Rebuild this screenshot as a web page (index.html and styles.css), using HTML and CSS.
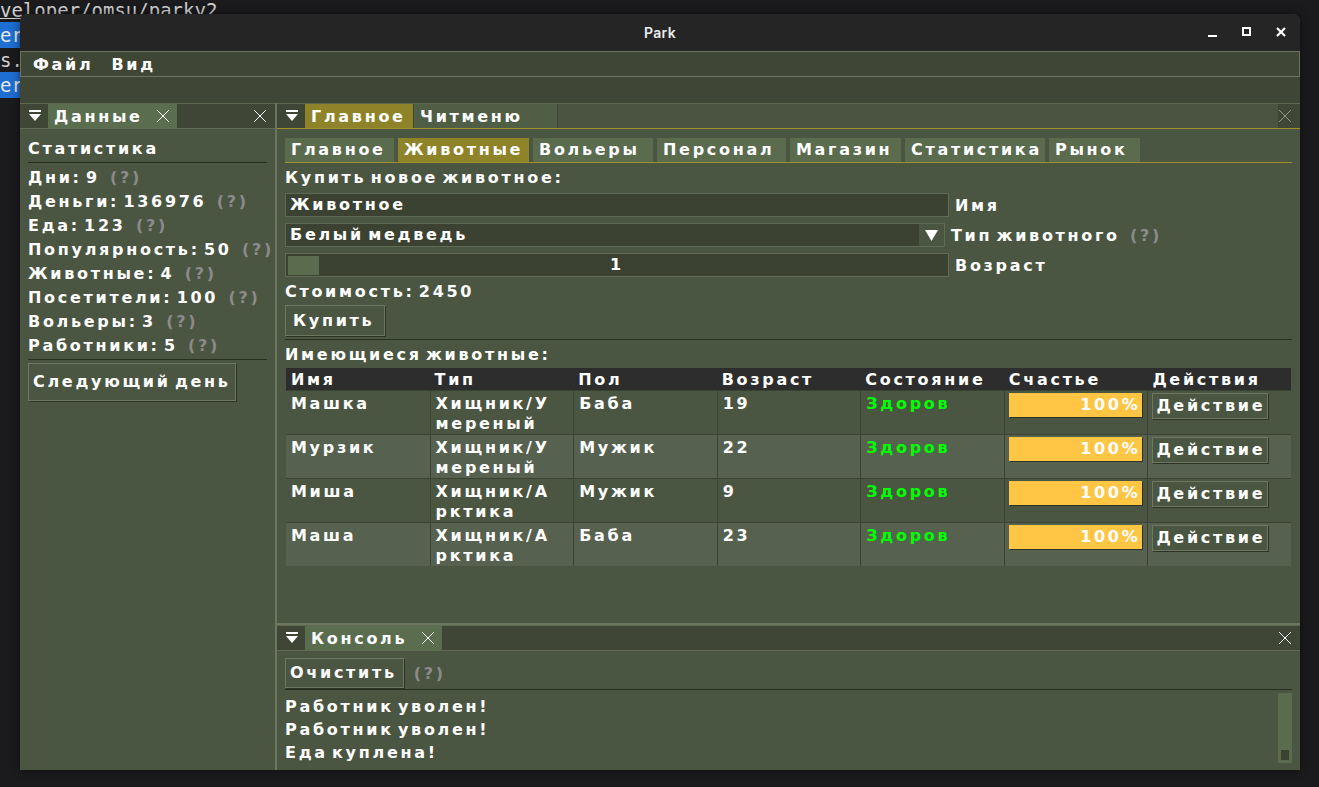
FILE: index.html
```html
<!DOCTYPE html>
<html lang="ru">
<head>
<meta charset="utf-8">
<title>Park</title>
<link rel="stylesheet" href="styles.css">
</head>
<body>
<div class="terminal">
  <div class="tline"><span class="ul">ve</span>loper/omsu/parky2</div>
  <div class="tline"><span class="hl">er</span></div>
  <div class="tline">s.</div>
  <div class="tline"><span class="hl">er</span></div>
</div>

<div class="window">
  <div class="titlebar">
    <span class="title">Park</span>
    <div class="wctl">
      <svg width="12" height="12" viewBox="0 0 12 12"><rect x="1" y="9" width="9" height="2" fill="#fff"/></svg>
      <svg width="12" height="12" viewBox="0 0 12 12"><rect x="2" y="2" width="7" height="7" fill="none" stroke="#fff" stroke-width="2"/></svg>
      <svg width="12" height="12" viewBox="0 0 12 12"><path d="M2 2 L10 10 M10 2 L2 10" stroke="#fff" stroke-width="2.2"/></svg>
    </div>
  </div>
  <div class="menubar"><span>Файл</span><span>Вид</span></div>
  <div class="band"></div>
  <div class="dock">
    <div class="leftdock">
      <div class="tabbar">
        <div class="collapse"><svg width="12" height="12" viewBox="0 0 12 12"><rect x="0" y="0" width="12" height="2" fill="#fff"/><path d="M0 4 H12 L6 11 Z" fill="#fff"/></svg></div>
        <div class="dtab focused tab-data"><span>Данные</span><svg class="x" width="14" height="14" viewBox="0 0 14 14"><path d="M1 1 L13 13 M13 1 L1 13" stroke="#fff" stroke-width="1"/></svg></div>
        <div class="tabfill"></div>
        <svg class="x bx" width="14" height="14" viewBox="0 0 14 14"><path d="M1 1 L13 13 M13 1 L1 13" stroke="#fff" stroke-width="1"/></svg>
      </div>
      <div class="lbody">
        <div class="line">Статистика</div>
        <div class="sep"></div>
        <div class="line">Дни: 9 <span class="q">(?)</span></div>
        <div class="line">Деньги: 136976 <span class="q">(?)</span></div>
        <div class="line">Еда: 123 <span class="q">(?)</span></div>
        <div class="line">Популярность: 50 <span class="q">(?)</span></div>
        <div class="line">Животные: 4 <span class="q">(?)</span></div>
        <div class="line">Посетители: 100 <span class="q">(?)</span></div>
        <div class="line">Вольеры: 3 <span class="q">(?)</span></div>
        <div class="line">Работники: 5 <span class="q">(?)</span></div>
        <div class="sep"></div>
        <div class="btn big">Следующий день</div>
      </div>
    </div>
    <div class="rightcol">
      <div class="mainpanel">
        <div class="tabbar gold">
          <div class="collapse"><svg width="12" height="12" viewBox="0 0 12 12"><rect x="0" y="0" width="12" height="2" fill="#fff"/><path d="M0 4 H12 L6 11 Z" fill="#fff"/></svg></div>
          <div class="dtab active tab-main">Главное</div>
          <div class="dtab tab-cheat">Читменю</div>
          <div class="tabfill light"></div>
          <svg class="x bx" width="14" height="14" viewBox="0 0 14 14"><path d="M1 1 L13 13 M13 1 L1 13" stroke="#8f9885" stroke-width="1"/></svg>
        </div>
        <div class="mbody">
          <div class="itabs">
            <div class="itab">Главное</div>
            <div class="itab on">Животные</div>
            <div class="itab">Вольеры</div>
            <div class="itab">Персонал</div>
            <div class="itab">Магазин</div>
            <div class="itab">Статистика</div>
            <div class="itab">Рынок</div>
          </div>
          <div class="line">Купить новое животное:</div>
          <div class="frow"><div class="input">Животное</div><span class="flabel">Имя</span></div>
          <div class="frow"><div class="input combo"><span>Белый медведь</span><span class="arrow"><svg width="13" height="12" viewBox="0 0 13 12"><path d="M0 1 H13 L6.5 12 Z" fill="#fff"/></svg></span></div><span class="flabel">Тип животного <span class="q">(?)</span></span></div>
          <div class="frow"><div class="input slider"><span class="grab"></span><span class="sval">1</span></div><span class="flabel">Возраст</span></div>
          <div class="line cost">Стоимость: 2450</div>
          <div class="btn buy">Купить</div>
          <div class="sep wide"></div>
          <div class="line">Имеющиеся животные:</div>
          <div class="table">
            <div class="tr th"><div>Имя</div><div>Тип</div><div>Пол</div><div>Возраст</div><div>Состояние</div><div>Счастье</div><div>Действия</div></div>
            <div class="tr"><div>Машка</div><div>Хищник/У<br>мереный</div><div>Баба</div><div>19</div><div class="ok">Здоров</div><div class="pc"><div class="bar">100%</div></div><div class="pc"><div class="btn act">Действие</div></div></div>
            <div class="tr alt"><div>Мурзик</div><div>Хищник/У<br>мереный</div><div>Мужик</div><div>22</div><div class="ok">Здоров</div><div class="pc"><div class="bar">100%</div></div><div class="pc"><div class="btn act">Действие</div></div></div>
            <div class="tr"><div>Миша</div><div>Хищник/А<br>рктика</div><div>Мужик</div><div>9</div><div class="ok">Здоров</div><div class="pc"><div class="bar">100%</div></div><div class="pc"><div class="btn act">Действие</div></div></div>
            <div class="tr alt"><div>Маша</div><div>Хищник/А<br>рктика</div><div>Баба</div><div>23</div><div class="ok">Здоров</div><div class="pc"><div class="bar">100%</div></div><div class="pc"><div class="btn act">Действие</div></div></div>
          </div>
        </div>
      </div>
      <div class="console">
        <div class="tabbar">
          <div class="collapse"><svg width="12" height="12" viewBox="0 0 12 12"><rect x="0" y="0" width="12" height="2" fill="#fff"/><path d="M0 4 H12 L6 11 Z" fill="#fff"/></svg></div>
          <div class="dtab focused tab-console"><span>Консоль</span><svg class="x" width="14" height="14" viewBox="0 0 14 14"><path d="M1 1 L13 13 M13 1 L1 13" stroke="#fff" stroke-width="1"/></svg></div>
          <div class="tabfill"></div>
          <svg class="x bx" width="14" height="14" viewBox="0 0 14 14"><path d="M1 1 L13 13 M13 1 L1 13" stroke="#fff" stroke-width="1"/></svg>
        </div>
        <div class="cbody">
          <div class="crow"><div class="btn clr">Очистить</div><span class="q">(?)</span></div>
          <div class="sep csep"></div>
          <div class="log">
            <div class="loglines">
              <div class="line cl">Работник уволен!</div>
              <div class="line cl">Работник уволен!</div>
              <div class="line cl">Еда куплена!</div>
            </div>
            <div class="scroll"><span class="sgrab"></span></div>
          </div>
        </div>
      </div>
    </div>
  </div>
</div>
</body>
</html>
```

FILE: styles.css
```css
html, body {
  margin: 0;
  padding: 0;
}
body {
  width: 1319px;
  height: 787px;
  overflow: hidden;
  background: #1b1b1d;
  position: relative;
  font-family: "DejaVu Sans", sans-serif;
  font-weight: bold;
  font-size: 16px;
  letter-spacing: 2.7px;
  word-spacing: -4px;
  color: #ffffff;
}
.terminal {
  font-family: "DejaVu Sans Mono", monospace;
  font-weight: normal;
  font-size: 19px;
  letter-spacing: 0;
  word-spacing: 0;
  color: #d0d0d0;
}
.tline {
  height: 25px;
  line-height: 20px;
}
.ul { text-decoration: underline; }
.hl {
  background: #1f6ed4;
  color: #e8e8e8;
  padding: 2px 4px 2px 0;
}
.window {
  position: absolute;
  left: 20px;
  top: 14px;
  width: 1280px;
  height: 756px;
  display: flex;
  flex-direction: column;
  background: #4b5642;
  border-radius: 8px 8px 0 0;
  overflow: hidden;
  box-shadow: 0 0 10px rgba(0,0,0,0.5);
}
.titlebar {
  height: 37px;
  background: #252525;
  position: relative;
  display: flex;
  align-items: center;
  justify-content: center;
  flex-shrink: 0;
}
.title {
  font-family: "Inter", "DejaVu Sans", sans-serif;
  font-weight: 600;
  font-size: 14px;
  letter-spacing: 0.3px;
  word-spacing: 0;
  color: #ececec;
}
.wctl {
  position: absolute;
  right: 13px;
  top: 12px;
  display: flex;
  gap: 22px;
}
.menubar {
  height: 24px;
  background: #3f4636;
  border: 1px solid #6a7460;
  display: flex;
  align-items: center;
  gap: 18px;
  padding-left: 12px;
  flex-shrink: 0;
}
.band {
  height: 26px;
  background: #3f4636;
  flex-shrink: 0;
}
.dock {
  flex: 1;
  display: flex;
  min-height: 0;
}
.leftdock {
  width: 255px;
  border-right: 2px solid #6b765f;
  display: flex;
  flex-direction: column;
  flex-shrink: 0;
}
.tabbar {
  height: 24px;
  background: #3f4636;
  display: flex;
  align-items: stretch;
  border-top: 1px solid #5e6a52;
  border-bottom: 1px solid #5e6a52;
  flex-shrink: 0;
  padding-left: 1px;
}
.tabbar.gold {
  border-bottom: 1px solid #a0912a;
}
.collapse {
  width: 27px;
  display: flex;
  align-items: center;
  justify-content: center;
  flex-shrink: 0;
}
.dtab {
  box-sizing: border-box;
  display: flex;
  align-items: center;
  justify-content: space-between;
  padding: 0 7px 0 6px;
  background: #4f5e45;
  margin-right: 1px;
  flex-shrink: 0;
}
.dtab.focused { background: #5a6d4f; }
.dtab.active { background: #8e8328; }
.tab-data { width: 129px; }
.tab-console { width: 137px; }
.tab-main { width: 108px; }
.tab-cheat { width: 143px; }
.tabfill { flex: 1; }
.tabfill.light { background: #4a5441; }
.x { flex-shrink: 0; }
.bx {
  align-self: center;
  margin-right: 8px;
}
.lbody {
  padding: 8px 8px;
  display: flex;
  flex-direction: column;
}
.line {
  height: 24px;
  line-height: 24px;
  white-space: nowrap;
}
.q {
  color: #8b8b8b;
  margin-left: 6px;
}
.sep {
  height: 1px;
  background: #26301f;
  margin: 1px 0 3px 0;
}
.btn {
  align-self: flex-start;
  background: #4b5642;
  border: 1px solid #6c785f;
  box-shadow: 1px 1px 0 #2c3325;
  padding: 0 4px;
  height: 28px;
  line-height: 28px;
}
.btn.big {
  height: 36px;
  line-height: 36px;
  width: 198px;
}
.btn.buy {
  padding: 0 10px 0 7px;
  height: 29px;
  line-height: 29px;
  margin-top: 1px;
}
.rightcol {
  flex: 1;
  display: flex;
  flex-direction: column;
  min-width: 0;
}
.mainpanel {
  height: 520px;
  border-bottom: 2px solid #6b765f;
  display: flex;
  flex-direction: column;
}
.mbody {
  padding: 9px 8px 0 8px;
  display: flex;
  flex-direction: column;
}
.itabs {
  display: flex;
  gap: 4px;
  border-bottom: 1px solid #a0912a;
  margin-bottom: 3px;
}
.itab {
  box-sizing: border-box;
  background: #5a6b4e;
  height: 24px;
  line-height: 24px;
  padding: 0 0 0 6px;
  white-space: nowrap;
  overflow: hidden;
}
.itab:nth-child(1) { width: 109px; }
.itab:nth-child(2) { width: 131px; }
.itab:nth-child(3) { width: 120px; }
.itab:nth-child(4) { width: 129px; }
.itab:nth-child(5) { width: 111px; }
.itab:nth-child(6) { width: 140px; }
.itab:nth-child(7) { width: 91px; }
.itab.on { background: #8e8328; }
.frow {
  display: flex;
  align-items: center;
  height: 30px;
}
.input {
  width: 654px;
  height: 22px;
  line-height: 22px;
  background: #3b4232;
  border: 1px solid #5f6b55;
  padding: 0 4px;
  position: relative;
}
.combo {
  display: flex;
  justify-content: space-between;
  padding-right: 0;
}
.arrow {
  width: 25px;
  background: #4b5642;
  display: flex;
  align-items: center;
  justify-content: center;
}
.slider {
  display: flex;
  align-items: center;
  justify-content: center;
  padding: 0;
  width: 662px;
}
.grab {
  position: absolute;
  left: 2px;
  top: 2px;
  width: 31px;
  height: 19px;
  background: #5a6b4e;
}
.flabel {
  margin-left: 6px;
}
.sep.wide { margin-top: 3px; }
.table {
  display: flex;
  flex-direction: column;
  width: 1005px;
  margin: 1px 0 0 1px;
}
.tr {
  display: grid;
  grid-template-columns: repeat(7, 1fr);
  background: #4b5642;
  height: 44px;
  box-sizing: border-box;
  border-top: 1px solid #3a4232;
}
.tr.alt { background: #566150; }
.tr > div {
  padding: 3px 4px 0 5px;
  line-height: 20px;
  border-left: 1px solid #3a4232;
  overflow: hidden;
}
.tr > div:first-child { border-left: none; }
.tr > div.pc { padding: 2px 5px 0 4px; }
.tr.th {
  height: 22px;
  background: #2d2d2d;
  border-top: none;
}
.tr.th > div {
  border-left: none;
  padding-top: 2px;
}
.ok { color: #00ff00; }
.bar {
  background: #ffc645;
  height: 24px;
  line-height: 24px;
  text-align: right;
  padding-right: 2px;
  box-shadow: 1px 1px 0 #2c3325;
}
.btn.act {
  display: inline-block;
  height: 24px;
  line-height: 24px;
  padding: 0 2px 0 3px;
}
.console {
  flex: 1;
  display: flex;
  flex-direction: column;
}
.cbody {
  padding: 7px 8px 0 8px;
  display: flex;
  flex-direction: column;
}
.crow {
  display: flex;
  align-items: center;
  gap: 4px;
}
.btn.clr { padding: 0 6px 0 4px; }
.sep.csep { margin: 1px 0 3px 0; }
.log {
  display: flex;
  justify-content: space-between;
}
.loglines { padding-top: 2px; }
.line.cl {
  height: 23px;
  line-height: 23px;
}
.scroll {
  width: 14px;
  height: 70px;
  background: #5a6b4e;
  position: relative;
  margin-top: 0;
}
.sgrab {
  position: absolute;
  left: 3px;
  bottom: 3px;
  width: 8px;
  height: 10px;
  background: #3b4232;
}
```
